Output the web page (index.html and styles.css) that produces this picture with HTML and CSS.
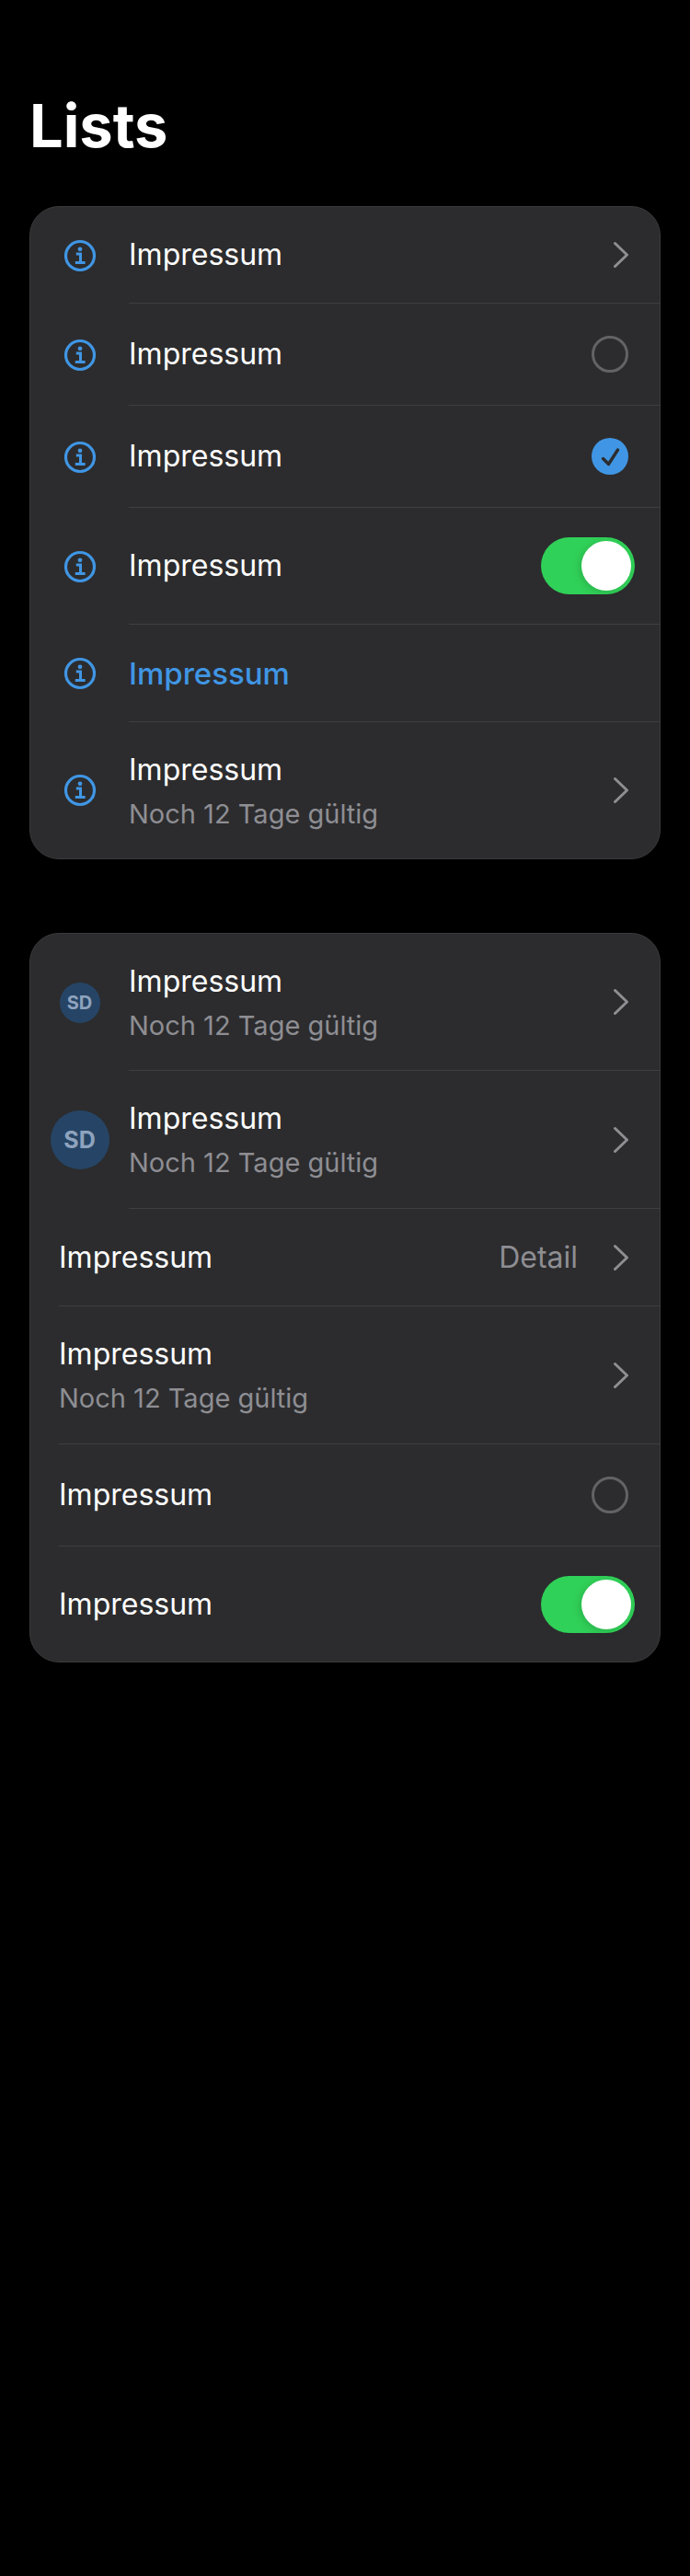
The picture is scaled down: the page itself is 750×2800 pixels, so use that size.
FILE: index.html
```html
<!DOCTYPE html>
<html lang="en">
<head>
  <meta charset="UTF-8">
  <meta name="viewport" content="width=device-width, initial-scale=1.0">
  <title>Lists</title>
  <link rel="stylesheet" href="styles.css">
</head>
<body>
  <svg class="defs" width="0" height="0">
    <symbol id="info" viewBox="0 0 36 36">
      <circle cx="18" cy="18" r="15.5" fill="none" stroke="currentColor" stroke-width="3.2"/>
      <circle cx="18" cy="10.8" r="2.4" fill="currentColor"/>
      <path d="M13.8 16h4.7v9.4M12.8 25.4h10.8" fill="none" stroke="currentColor" stroke-width="3"/>
    </symbol>
    <symbol id="chevron" viewBox="0 0 18 30">
      <path d="M3.5 2.5L16.5 15L3.5 27.5" fill="none" stroke="currentColor" stroke-width="3" stroke-linecap="round" stroke-linejoin="round"/>
    </symbol>
    <symbol id="check" viewBox="0 0 40 40">
      <path d="M12.5 22.5l6 6L28.5 13" fill="none" stroke="currentColor" stroke-width="3.4" stroke-linecap="round" stroke-linejoin="round"/>
    </symbol>
  </svg>

  <div class="page">
    <h1>Lists</h1>

    <div class="card">
      <div class="row h-105">
        <div class="lead"><svg class="info"><use href="#info"/></svg></div>
        <div class="body">
          <div class="text"><div class="label">Impressum</div></div>
          <svg class="chevron"><use href="#chevron"/></svg>
        </div>
      </div>
      <div class="row h-111">
        <div class="lead"><svg class="info"><use href="#info"/></svg></div>
        <div class="body">
          <div class="text"><div class="label">Impressum</div></div>
          <span class="radio"></span>
        </div>
      </div>
      <div class="row h-111">
        <div class="lead"><svg class="info"><use href="#info"/></svg></div>
        <div class="body">
          <div class="text"><div class="label">Impressum</div></div>
          <svg class="checked"><use href="#check"/></svg>
        </div>
      </div>
      <div class="row h-127">
        <div class="lead"><svg class="info"><use href="#info"/></svg></div>
        <div class="body">
          <div class="text"><div class="label">Impressum</div></div>
          <span class="toggle"><span class="thumb"></span></span>
        </div>
      </div>
      <div class="row h-106">
        <div class="lead"><svg class="info"><use href="#info"/></svg></div>
        <div class="body">
          <div class="text"><div class="label link">Impressum</div></div>
        </div>
      </div>
      <div class="row h-148 last">
        <div class="lead"><svg class="info"><use href="#info"/></svg></div>
        <div class="body">
          <div class="text two">
            <div class="label">Impressum</div>
            <div class="sub">Noch 12 Tage gültig</div>
          </div>
          <svg class="chevron"><use href="#chevron"/></svg>
        </div>
      </div>
    </div>

    <div class="card">
      <div class="row h-149">
        <div class="lead"><span class="avatar small">SD</span></div>
        <div class="body">
          <div class="text two">
            <div class="label">Impressum</div>
            <div class="sub">Noch 12 Tage gültig</div>
          </div>
          <svg class="chevron"><use href="#chevron"/></svg>
        </div>
      </div>
      <div class="row h-150">
        <div class="lead"><span class="avatar">SD</span></div>
        <div class="body">
          <div class="text two">
            <div class="label">Impressum</div>
            <div class="sub">Noch 12 Tage gültig</div>
          </div>
          <svg class="chevron"><use href="#chevron"/></svg>
        </div>
      </div>
      <div class="row h-106 plain">
        <div class="body">
          <div class="text"><div class="label">Impressum</div></div>
          <span class="detail">Detail</span>
          <svg class="chevron"><use href="#chevron"/></svg>
        </div>
      </div>
      <div class="row h-150 plain">
        <div class="body">
          <div class="text two">
            <div class="label">Impressum</div>
            <div class="sub">Noch 12 Tage gültig</div>
          </div>
          <svg class="chevron"><use href="#chevron"/></svg>
        </div>
      </div>
      <div class="row h-111 plain">
        <div class="body">
          <div class="text"><div class="label">Impressum</div></div>
          <span class="radio"></span>
        </div>
      </div>
      <div class="row h-125 plain last">
        <div class="body">
          <div class="text"><div class="label">Impressum</div></div>
          <span class="toggle"><span class="thumb"></span></span>
        </div>
      </div>
    </div>
  </div>
</body>
</html>
```

FILE: styles.css
```css
body {
  margin: 0;
  background: #000;
  color: #fff;
  font-family: Inter, sans-serif;
}
.defs {
  position: absolute;
}
.page {
  height: 2800px;
  padding: 97px 32px 0;
  box-sizing: border-box;
}
h1 {
  margin: 0 0 47px;
  font-size: 65px;
  line-height: 80px;
  font-weight: 700;
}
.card {
  background: #2c2c2e;
  border: 1px solid #3a3a3c;
  border-radius: 32px;
  margin-bottom: 80px;
  overflow: hidden;
}
.row {
  display: flex;
  align-items: stretch;
}
.h-105 { height: 105px; }
.h-106 { height: 106px; }
.h-111 { height: 111px; }
.h-125 { height: 125px; }
.h-127 { height: 127px; }
.h-148 { height: 148px; }
.h-149 { height: 149px; }
.h-150 { height: 150px; }
.lead {
  width: 107px;
  flex: none;
  display: flex;
  align-items: center;
  justify-content: center;
}
.plain {
  padding-left: 31px;
}
.body {
  flex: 1;
  min-width: 0;
  display: flex;
  align-items: center;
  border-bottom: 1px solid #3f3f41;
  padding-right: 34px;
}
.last .body {
  border-bottom: none;
}
.text {
  flex: 1;
}
.two {
  padding-top: 3px;
}
.label {
  font-size: 32px;
  line-height: 46px;
}
.link {
  color: #4096e4;
  font-weight: 550;
  font-size: 33px;
}
.sub {
  font-size: 29px;
  line-height: 46px;
  margin-top: 2px;
  color: #8e8e93;
}
.detail {
  font-size: 32px;
  color: #8e8e93;
  margin-right: 37px;
}
.info {
  width: 36px;
  height: 36px;
  color: #4096e4;
}
.chevron {
  width: 18px;
  height: 30px;
  color: #8e8e93;
}
.radio {
  width: 40px;
  height: 40px;
  box-sizing: border-box;
  border: 3px solid #636366;
  border-radius: 50%;
}
.checked {
  width: 40px;
  height: 40px;
  background: #4096e4;
  border-radius: 50%;
  color: #2c2c2e;
}
.toggle {
  width: 102px;
  height: 62px;
  margin-right: -7px;
  padding: 4px;
  box-sizing: border-box;
  background: #30d158;
  border-radius: 31px;
  display: flex;
  justify-content: flex-end;
}
.thumb {
  width: 54px;
  height: 54px;
  background: #fff;
  border-radius: 50%;
  box-shadow: -2px 2px 8px rgba(0, 0, 0, 0.15);
}
.avatar {
  width: 64px;
  height: 64px;
  border-radius: 50%;
  background: #264566;
  color: #8fa3be;
  font-size: 25px;
  font-weight: 700;
  display: flex;
  align-items: center;
  justify-content: center;
}
.avatar.small {
  width: 44px;
  height: 44px;
  font-size: 20px;
}
```
